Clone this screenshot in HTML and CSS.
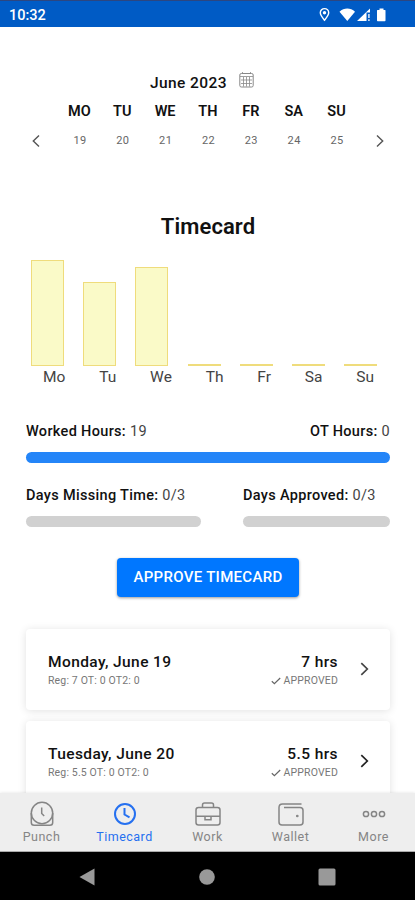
FILE: index.html
```
<!DOCTYPE html>
<html lang="en">
<head>
    <meta charset="UTF-8">
    <meta name="viewport" content="width=device-width, initial-scale=1.0">
    <title>Timecard</title>
    <link rel="stylesheet" href="styles.css">
</head>
<body>
    <header class="status-bar">
        <span class="clock">10:32</span>
        <svg class="status-icons" width="72" height="18" viewBox="0 0 72 18" fill="#fff">
            <path d="M8.500 14.200C5.500 10.500 4.300 8.500 4.300 6.800a4.200 4.200 0 0 1 8.400 0c0 1.700-1.200 3.700-4.200 7.400z" fill="none" stroke="#fff" stroke-width="1.400"/>
            <circle cx="8.500" cy="6.800" r="1.700"/>
            <path d="M23.500 5.700C28 1.500 34.500 1.500 39 5.700L31.300 15z"/>
            <path d="M41 15L54 2.500V6.500H50.500V15z"/>
            <path d="M52 8h1.800v4H52zM52 13.200h1.800v1.800H52z" opacity=".75"/>
            <path d="M61.500 4h2V2.500h4V4h1.500q.5 0 .5.600v10q0 .700-.700.700h-7.100q-.700 0-.700-.700v-10q0-.600.500-.600z"/>
        </svg>
    </header>

    <main class="content">
        <section class="week">
            <div class="month">
                <span>June 2023</span>
                <svg width="15" height="16" viewBox="0 0 15 16" fill="none" stroke="#888" stroke-width="1">
                    <rect x=".8" y="1.500" width="13.400" height="13.500" rx="1.500"/>
                    <path d="M3.500 0v2M11.500 0v2M1 4.500h13M2 8h11M2 11.500h11M4.500 5v9.500M7.500 5v9.500M10.500 5v9.500" opacity=".8"/>
                </svg>
            </div>
            <div class="week-row week-names">
                <span>MO</span><span>TU</span><span>WE</span><span>TH</span><span>FR</span><span>SA</span><span>SU</span>
            </div>
            <div class="week-nav">
                <svg width="8" height="14" viewBox="0 0 8 14" fill="none" stroke="#555" stroke-width="1.400"><path d="M7 1.500L1.300 7L7 12.500"/></svg>
                <div class="week-row week-days">
                    <span>19</span><span>20</span><span>21</span><span>22</span><span>23</span><span>24</span><span>25</span>
                </div>
                <svg width="8" height="14" viewBox="0 0 8 14" fill="none" stroke="#555" stroke-width="1.400"><path d="M1 1.500L6.700 7L1 12.500"/></svg>
            </div>
        </section>

        <h1>Timecard</h1>

        <section class="chart">
            <div class="bars">
                <div class="bar" style="height: 106px"></div>
                <div class="bar" style="height: 84px"></div>
                <div class="bar" style="height: 99px"></div>
                <div class="bar" style="height: 2px"></div>
                <div class="bar" style="height: 2px"></div>
                <div class="bar" style="height: 2px"></div>
                <div class="bar" style="height: 2px"></div>
            </div>
            <div class="bar-labels">
                <span>Mo</span><span>Tu</span><span>We</span><span>Th</span><span>Fr</span><span>Sa</span><span>Su</span>
            </div>
        </section>

        <section class="stats">
            <div class="stat-line">
                <span><b>Worked Hours:</b> 19</span>
                <span><b>OT Hours:</b> 0</span>
            </div>
            <div class="progress full"></div>
            <div class="stat-columns">
                <div>
                    <div class="stat-line"><span><b>Days Missing Time:</b> 0/3</span></div>
                    <div class="progress"></div>
                </div>
                <div>
                    <div class="stat-line"><span><b>Days Approved:</b> 0/3</span></div>
                    <div class="progress"></div>
                </div>
            </div>
        </section>

        <button class="approve">APPROVE TIMECARD</button>

        <section class="days">
            <div class="day-card">
                <div class="day-info">
                    <div class="day-title">Monday, June 19</div>
                    <div class="day-note">Reg: 7 OT: 0 OT2: 0</div>
                </div>
                <div class="day-hours">
                    <div class="day-title">7 hrs</div>
                    <div class="day-status">
                        <svg width="10" height="8" viewBox="0 0 10 8" fill="none" stroke="#666" stroke-width="1.200"><path d="M.8 4.300L3.400 6.700L9.200 1"/></svg>
                        <span>APPROVED</span>
                    </div>
                </div>
                <svg class="chevron" width="9" height="14" viewBox="0 0 9 14" fill="none" stroke="#444" stroke-width="1.700"><path d="M1.300 1.200L7.300 7L1.300 12.800"/></svg>
            </div>
            <div class="day-card">
                <div class="day-info">
                    <div class="day-title">Tuesday, June 20</div>
                    <div class="day-note">Reg: 5.5 OT: 0 OT2: 0</div>
                </div>
                <div class="day-hours">
                    <div class="day-title">5.5 hrs</div>
                    <div class="day-status">
                        <svg width="10" height="8" viewBox="0 0 10 8" fill="none" stroke="#666" stroke-width="1.200"><path d="M.8 4.300L3.400 6.700L9.200 1"/></svg>
                        <span>APPROVED</span>
                    </div>
                </div>
                <svg class="chevron" width="9" height="14" viewBox="0 0 9 14" fill="none" stroke="#222" stroke-width="1.700"><path d="M1.300 1.200L7.300 7L1.300 12.800"/></svg>
            </div>
        </section>
    </main>

    <nav class="tabs">
        <a class="tab">
            <svg width="28" height="28" viewBox="0 0 28 28"><circle cx="14" cy="13" r="10.700"/><path d="M3.300 13v9.500q0 2.800 2.800 2.800h15.800q2.800 0 2.800-2.800V13M13.700 7.500v6l2.500 2.500"/></svg>
            <span>Punch</span>
        </a>
        <a class="tab active">
            <svg width="28" height="28" viewBox="0 0 28 28"><circle cx="14" cy="15" r="10"/><path d="M13.500 9v6.500l5 2.800"/></svg>
            <span>Timecard</span>
        </a>
        <a class="tab">
            <svg width="28" height="28" viewBox="0 0 28 28"><rect x="2" y="7.500" width="24" height="17.500" rx="2.500"/><path d="M8.500 7.500V5q0-2 2-2h7q2 0 2 2v2.500M2 16.300h24M11 16.300v3.400h6v-3.400"/></svg>
            <span>Work</span>
        </a>
        <a class="tab">
            <svg width="28" height="28" viewBox="0 0 28 28"><path d="M24.500 4H5.500Q2 4 2 7.500V22q0 3 3 3h18q3 0 3-3V10.500q0-3-3-3H7"/><circle cx="20.300" cy="16" r=".6"/></svg>
            <span>Wallet</span>
        </a>
        <a class="tab">
            <svg width="28" height="28" viewBox="0 0 28 28"><circle cx="6" cy="14" r="2.600"/><circle cx="14" cy="14" r="2.600"/><circle cx="22" cy="14" r="2.600"/></svg>
            <span>More</span>
        </a>
    </nav>

    <footer class="system-nav">
        <svg width="16" height="18" viewBox="0 0 16 18"><path d="M15.500.5v17L.5 9z"/></svg>
        <svg width="16" height="16" viewBox="0 0 16 16"><circle cx="8" cy="8" r="7.800"/></svg>
        <svg width="18" height="18" viewBox="0 0 18 18"><rect x=".5" y=".5" width="17" height="17" rx="1.500"/></svg>
    </footer>
</body>
</html>
```
FILE: styles.css
```
* {
    box-sizing: border-box;
}

body {
    display: flex;
    flex-direction: column;
    height: 900px;
    margin: 0;
    overflow: hidden;
    background-color: #fff;
    color: #111;
    font-family: Roboto, sans-serif;
}

svg {
    display: block;
    flex: none;
}

.status-bar {
    display: flex;
    flex: none;
    justify-content: space-between;
    height: 27px;
    padding: 5px 27px 0 9px;
    border-top: 1px solid #2c4680;
    background-color: #005bc5;
}

.clock {
    color: #fff;
    font-size: 14.5px;
    font-weight: 500;
    line-height: 20px;
}

.content {
    flex: 1;
    min-height: 0;
    overflow: hidden;
    padding: 45px 25px 0 26px;
}

.month {
    display: flex;
    align-items: center;
    gap: 12px;
    height: 21px;
    padding-left: 124px;
    font-size: 15.5px;
    font-weight: 500;
    letter-spacing: 0.4px;
}

.month svg {
    margin-top: -5px;
}

.week-row {
    display: grid;
    grid-template-columns: repeat(7, 42.85px);
    text-align: center;
}

.week-names {
    margin-left: 32px;
    height: 37px;
    font-size: 14.5px;
    font-weight: 600;
    line-height: 37px;
}

.week-nav {
    display: flex;
    align-items: center;
    justify-content: space-between;
    height: 21px;
    padding: 0 6px;
}

.week-days {
    padding-left: 1px;
    color: #666;
    font-size: 11px;
    letter-spacing: 0.4px;
}

h1 {
    margin: 61px 0 0;
    font-size: 22px;
    font-weight: 600;
    line-height: 30px;
    letter-spacing: 0.1px;
    text-align: center;
}

.bars {
    display: flex;
    align-items: flex-end;
    gap: 19.2px;
    height: 124px;
    padding-left: 5px;
}

.bar {
    width: 33px;
    border: 1px solid #efdc7c;
    background-color: #fafac8;
}

.bar-labels {
    display: flex;
    justify-content: space-between;
    height: 22px;
    padding: 0 16px 0 17px;
    color: #444;
    font-size: 15.5px;
    line-height: 23px;
}

.stats {
    margin-top: 33px;
}

.stat-line {
    display: flex;
    justify-content: space-between;
    height: 20px;
    color: #444;
    font-size: 14.5px;
    line-height: 21px;
    letter-spacing: 0.32px;
    white-space: nowrap;
}

.stat-line b {
    color: #111;
    font-weight: 500;
}

.progress {
    height: 11px;
    margin-top: 11px;
    border-radius: 6px;
    background-color: #d1d1d1;
}

.progress.full {
    background-color: #2485f8;
}

.stat-columns {
    display: grid;
    grid-template-columns: 175px 147px;
    justify-content: space-between;
    margin-top: 22px;
}

.approve {
    display: block;
    width: 182px;
    height: 39px;
    margin: 31px auto 0;
    padding: 0 0 2px;
    border: none;
    border-radius: 4px;
    background-color: #0077ff;
    box-shadow: 0 1px 3px rgba(0, 0, 0, 0.4);
    color: #fff;
    font-family: inherit;
    font-size: 15px;
    font-weight: 500;
    letter-spacing: 0.3px;
}

.days {
    display: flex;
    flex-direction: column;
    gap: 11px;
    margin-top: 32px;
}

.day-card {
    display: flex;
    align-items: center;
    height: 81px;
    padding: 2px 21px 0 22px;
    border-radius: 4px;
    background-color: #fff;
    box-shadow: 0 1px 9px rgba(0, 0, 0, 0.12);
}

.day-info {
    flex: 1;
}

.day-title {
    font-size: 15.5px;
    font-weight: 500;
    line-height: 20px;
    letter-spacing: 0.4px;
}

.day-note,
.day-status {
    color: #777;
    font-size: 10.5px;
    line-height: 17px;
    letter-spacing: 0.15px;
}

.day-hours {
    text-align: right;
}

.day-status {
    display: flex;
    align-items: center;
    gap: 3px;
}

.chevron {
    margin-left: 22px;
    margin-top: -4px;
}

.tabs {
    display: grid;
    flex: none;
    grid-template-columns: repeat(5, 83px);
    height: 59px;
    border-bottom: 1px solid #aaa;
    background-color: #eee;
    box-shadow: 0 0 3px rgba(0, 0, 0, 0.12);
}

.tab {
    display: flex;
    flex-direction: column;
    align-items: center;
    padding-top: 7px;
    color: #858585;
    font-size: 12.5px;
    line-height: 18px;
    letter-spacing: 0.5px;
}

.tab svg {
    fill: none;
    stroke: currentColor;
    stroke-width: 1.5;
}

.tab.active {
    color: #2570f0;
}

.tab.active svg {
    margin-top: -1px;
    margin-bottom: 1px;
    stroke-width: 2;
}

.system-nav {
    display: flex;
    flex: none;
    align-items: center;
    justify-content: space-between;
    height: 48px;
    padding: 2px 79px 0;
    background-color: #000;
    fill: #999;
}
```
